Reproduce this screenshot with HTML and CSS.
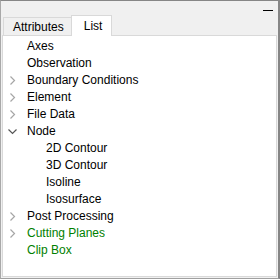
FILE: index.html
```html
<!DOCTYPE html>
<html>
<head>
<meta charset="utf-8">
<link rel="stylesheet" href="styles.css">
</head>
<body>
<div class="window">
  <div class="header"><div class="minimize"></div></div>
  <div class="tabs">
    <div class="tab">Attributes</div>
    <div class="tab selected">List</div>
  </div>
  <div class="panel">
    <div class="row"><span class="toggle"></span><span>Axes</span></div>
    <div class="row"><span class="toggle"></span><span>Observation</span></div>
    <div class="row"><span class="toggle"><svg width="24" height="17" viewBox="0 0 24 17"><polyline class="chev" points="7.5,4.5 11.5,8.5 7.5,12.5"/></svg></span><span>Boundary Conditions</span></div>
    <div class="row"><span class="toggle"><svg width="24" height="17" viewBox="0 0 24 17"><polyline class="chev" points="7.5,4.5 11.5,8.5 7.5,12.5"/></svg></span><span>Element</span></div>
    <div class="row"><span class="toggle"><svg width="24" height="17" viewBox="0 0 24 17"><polyline class="chev" points="7.5,4.5 11.5,8.5 7.5,12.5"/></svg></span><span>File Data</span></div>
    <div class="row"><span class="toggle"><svg width="24" height="17" viewBox="0 0 24 17"><polyline class="chev open" points="5.5,6.5 9.5,10.5 13.5,6.5"/></svg></span><span>Node</span></div>
    <div class="row child"><span class="toggle"></span><span>2D Contour</span></div>
    <div class="row child"><span class="toggle"></span><span>3D Contour</span></div>
    <div class="row child"><span class="toggle"></span><span>Isoline</span></div>
    <div class="row child"><span class="toggle"></span><span>Isosurface</span></div>
    <div class="row"><span class="toggle"><svg width="24" height="17" viewBox="0 0 24 17"><polyline class="chev" points="7.5,4.5 11.5,8.5 7.5,12.5"/></svg></span><span>Post Processing</span></div>
    <div class="row green"><span class="toggle"><svg width="24" height="17" viewBox="0 0 24 17"><polyline class="chev" points="7.5,4.5 11.5,8.5 7.5,12.5"/></svg></span><span>Cutting Planes</span></div>
    <div class="row green"><span class="toggle"></span><span>Clip Box</span></div>
  </div>
</div>
</body>
</html>
```
FILE: styles.css
```css
html, body {
  margin: 0;
  padding: 0;
}
body {
  width: 280px;
  height: 279px;
  font-family: "Liberation Sans", Arial, sans-serif;
  font-size: 12px;
  color: #000;
}
.window {
  box-sizing: border-box;
  width: 280px;
  height: 279px;
  background: #f0f0f0;
  border-top: 1px solid #868686;
  border-left: 1px solid #a8a8a8;
  border-right: 2px solid #868686;
  border-bottom: 1px solid #a0a0a0;
  padding: 0 1px 1px 1px;
  display: flex;
  flex-direction: column;
}
.header {
  height: 14px;
  box-sizing: border-box;
  padding-top: 9px;
  padding-right: 4px;
  display: flex;
  justify-content: flex-end;
}
.minimize {
  width: 10px;
  height: 1px;
  background: #000;
}
.tabs {
  display: flex;
  align-items: flex-end;
  margin-left: 1px;
  height: 20px;
}
.tab {
  box-sizing: border-box;
  height: 18px;
  line-height: 15px;
  padding: 2px 7px 0 9px;
  background: #f0f0f0;
  border: 1px solid #d9d9d9;
  border-right: none;
  border-bottom: none;
}
.tab.selected {
  position: relative;
  z-index: 1;
  height: 21px;
  margin-bottom: -1px;
  padding: 3px 9px 0 12px;
  background: #fff;
  border-right: 1px solid #d9d9d9;
}
.panel {
  flex: 1;
  background: #fff;
  border: 1px solid #d9d9d9;
  padding-top: 2px;
}
.row {
  display: flex;
  height: 17px;
  line-height: 17px;
  white-space: nowrap;
}
.row.child {
  padding-left: 19px;
}
.row.green {
  color: #008000;
}
.toggle {
  width: 24px;
  height: 17px;
  flex: none;
}
.toggle svg {
  display: block;
}
.chev {
  fill: none;
  stroke: #a6a6a6;
  stroke-width: 1.2;
}
.chev.open {
  stroke: #555555;
}
```
